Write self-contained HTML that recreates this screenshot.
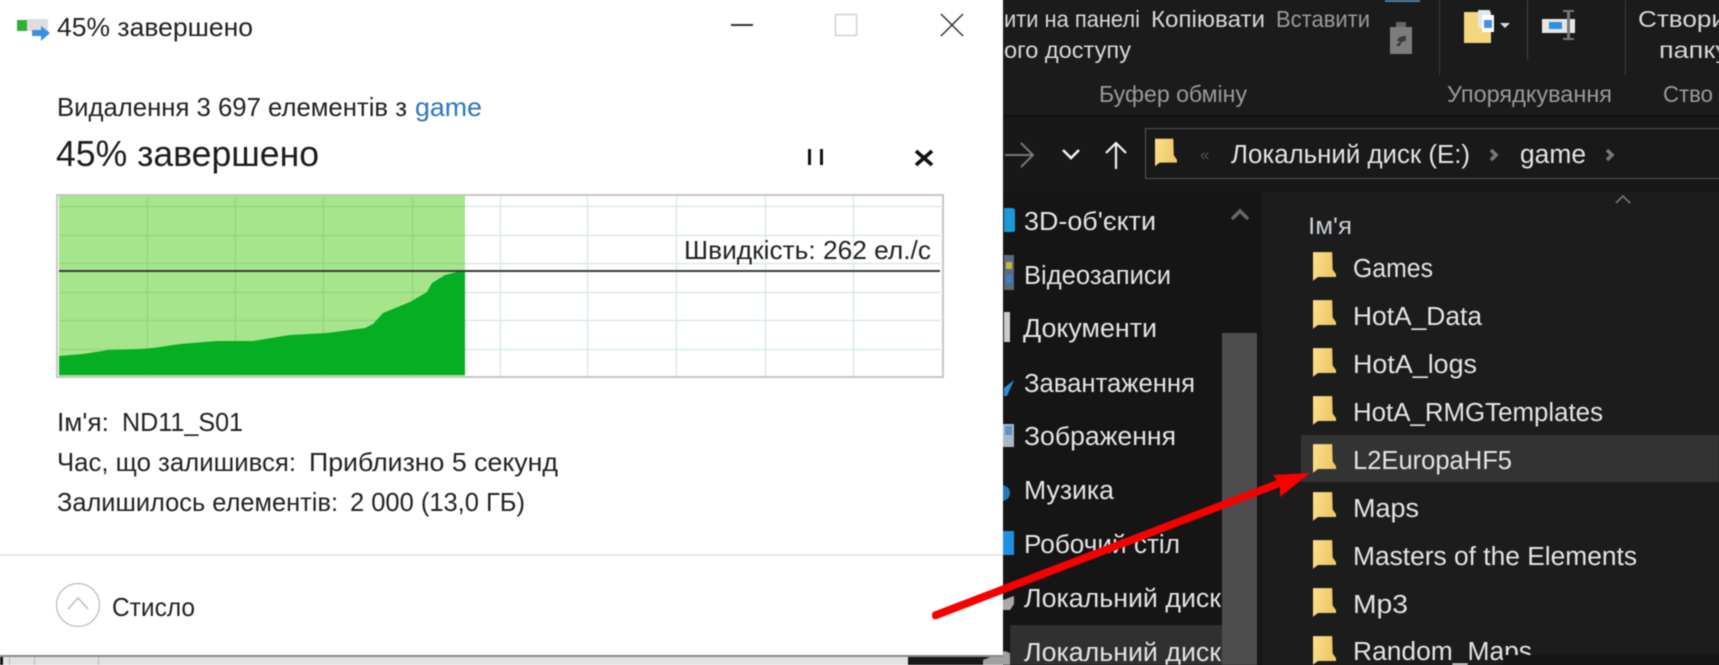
<!DOCTYPE html>
<html lang="uk">
<head>
<meta charset="utf-8">
<title>45% завершено</title>
<style>
html,body{margin:0;padding:0;width:1719px;height:665px;overflow:hidden;background:linear-gradient(90deg,#fff 0,#fff 1003px,#191919 1003px,#191919 1719px)}
svg{display:block;filter:blur(.4px)}
text{font-family:"Liberation Sans",sans-serif}
.d{fill:#222;font-size:26px}
.w{fill:#e4e4e4;font-size:25.500px}
.r{fill:#d8d8d8;font-size:23.500px}
.g{fill:#9a9a9a;font-size:23.500px}
</style>
</head>
<body>
<svg width="1719" height="665" viewBox="0 0 1719 665" xmlns="http://www.w3.org/2000/svg">
<defs>
<linearGradient id="fg" x1="0" x2="1" y1="0" y2="0.3"><stop offset="0" stop-color="#fbe08a"/><stop offset="1" stop-color="#eec866"/></linearGradient>
<symbol id="folder" viewBox="0 0 24 32" overflow="visible"><path d="M0 1H20L20.500 19L24 24V27H5L0 31Z" fill="url(#fg)"/></symbol>
</defs>

<!-- explorer background -->
<rect width="1719" height="665" fill="#191919"/>
<rect x="1003" y="0" width="716" height="115" fill="#1b1b1b"/>
<rect x="1003" y="115" width="716" height="2" fill="#111"/>
<rect x="1003" y="117" width="716" height="75" fill="#181818"/>
<rect x="1003" y="192" width="259" height="473" fill="#151515"/>
<rect x="1262" y="192" width="457" height="473" fill="#1c1c1c"/>

<!-- ribbon -->
<rect x="1385" y="0" width="35" height="2" fill="#4f7fa8"/>
<path d="M1390 27H1412V54H1390Z" fill="#7c7c7c"/><rect x="1396" y="22" width="10" height="5" fill="#666"/>
<path d="M1396 46l4-5h-3c1-4 4-5 9-5v5c-3 0-5 1-6 5z" fill="#3a3a3a"/>
<rect x="1439" y="0" width="1" height="75" fill="#3c3c3c"/>
<rect x="1527" y="0" width="1" height="60" fill="#444"/>
<rect x="1625" y="0" width="1" height="75" fill="#3c3c3c"/>
<rect x="1464" y="12" width="27" height="31" fill="#f3d77c"/>
<rect x="1478" y="10" width="12" height="18" fill="#dfe8f2"/><rect x="1482" y="15" width="12" height="17" fill="#fff"/><rect x="1484" y="20" width="8" height="8" fill="#4a90d8"/>
<path d="M1500 23h10l-5 5z" fill="#ddd"/>
<rect x="1542" y="19" width="33" height="14" fill="#e6e6e6"/><rect x="1549" y="22" width="13" height="7" fill="#2f8fe0"/>
<rect x="1567" y="10" width="3" height="30" fill="#777"/><rect x="1563" y="10" width="11" height="2" fill="#777"/><rect x="1563" y="38" width="11" height="2" fill="#777"/>

<text class="r" x="1004" y="27" textLength="136" lengthAdjust="spacingAndGlyphs">ити на панелі</text>
<text class="r" x="1151" y="27" textLength="114" lengthAdjust="spacingAndGlyphs">Копіювати</text>
<text class="g" x="1276" y="27" textLength="94" lengthAdjust="spacingAndGlyphs">Вставити</text>
<text class="r" x="1004" y="58" textLength="127" lengthAdjust="spacingAndGlyphs">ого доступу</text>
<text class="r" x="1638" y="27" textLength="88" lengthAdjust="spacingAndGlyphs">Створи</text>
<text class="r" x="1659" y="58" textLength="70" lengthAdjust="spacingAndGlyphs">папку</text>
<text class="g" x="1099" y="102" textLength="148" lengthAdjust="spacingAndGlyphs">Буфер обміну</text>
<text class="g" x="1447" y="102" textLength="165" lengthAdjust="spacingAndGlyphs">Упорядкування</text>
<text class="g" x="1663" y="102" textLength="50" lengthAdjust="spacingAndGlyphs">Ство</text>

<!-- nav bar -->
<path d="M1005 155H1033M1021 143L1033 155L1021 167" fill="none" stroke="#777" stroke-width="2"/>
<path d="M1063 150L1071 158L1079 150" fill="none" stroke="#eee" stroke-width="2.600"/>
<path d="M1116 169V143M1106 153L1116 143L1126 153" fill="none" stroke="#f2f2f2" stroke-width="2.200"/>
<rect x="1145.500" y="128.500" width="580" height="50" fill="#191919" stroke="#555"/>
<use href="#folder" x="1155" y="137" width="22" height="31"/>
<text x="1200" y="160" fill="#555" font-size="17">«</text>
<text class="w" x="1231" y="163" textLength="239" lengthAdjust="spacingAndGlyphs">Локальний диск (E:)</text>
<path d="M1491 150L1496 155L1491 160" fill="none" stroke="#777" stroke-width="3.600"/>
<text class="w" x="1520" y="163" textLength="66" lengthAdjust="spacingAndGlyphs">game</text>
<path d="M1607 150L1612 155L1607 160" fill="none" stroke="#777" stroke-width="3.600"/>

<!-- sidebar -->
<path d="M1004 208h8q3 0 3 3v19q0 2-3 2h-8z" fill="#1b9ad6"/>
<rect x="1004" y="255" width="10" height="35" fill="#5a6a80"/><rect x="1006" y="262" width="6" height="7" fill="#c9b53a"/><rect x="1006" y="275" width="6" height="8" fill="#3f7fc8"/>
<rect x="1004" y="312" width="6" height="30" fill="#c8ccd0"/>
<path d="M1004 388L1014 380L1007 396L1004 396Z" fill="#2a8fd0"/>
<rect x="1003" y="424" width="11" height="23" fill="#aab8c4"/><rect x="1005" y="426" width="7" height="9" fill="#5d93c9"/>
<path d="M1003 485q7 2 7 8t-7 8z" fill="#1f79b8"/>
<rect x="1003" y="531" width="11" height="24" fill="#1f8fde"/>
<path d="M1003 600L1014 596V604L1010 610H1003Z" fill="#a8a8a8"/>
<path d="M983 660L1005 651L1014 655V665H983Z" fill="#a0a0a0"/>
<rect x="1010" y="625" width="212" height="40" fill="#303030"/>
<path d="M1232 219L1240 211L1248 219" fill="none" stroke="#666" stroke-width="3.500"/>
<text class="w" x="1024" y="230" textLength="132" lengthAdjust="spacingAndGlyphs">3D-об'єкти</text>
<text class="w" x="1024" y="284" textLength="147" lengthAdjust="spacingAndGlyphs">Відеозаписи</text>
<text class="w" x="1023" y="337" textLength="134" lengthAdjust="spacingAndGlyphs">Документи</text>
<text class="w" x="1024" y="392" textLength="171" lengthAdjust="spacingAndGlyphs">Завантаження</text>
<text class="w" x="1024" y="445" textLength="152" lengthAdjust="spacingAndGlyphs">Зображення</text>
<text class="w" x="1024" y="499" textLength="90" lengthAdjust="spacingAndGlyphs">Музика</text>
<text class="w" x="1024" y="553" textLength="156" lengthAdjust="spacingAndGlyphs">Робочий стіл</text>
<text class="w" x="1024" y="607" textLength="197" lengthAdjust="spacingAndGlyphs">Локальний диск</text>
<text class="w" x="1024" y="661" textLength="197" lengthAdjust="spacingAndGlyphs">Локальний диск</text>
<rect x="1222" y="333" width="35" height="332" fill="#4d4d4d"/>

<!-- file list -->
<path d="M1616 203L1623 196L1630 203" fill="none" stroke="#777" stroke-width="1.600"/>
<text x="1308" y="234" fill="#c8d0d8" font-size="24" textLength="44" lengthAdjust="spacingAndGlyphs">Ім'я</text>
<rect x="1301" y="435" width="418" height="47" fill="#333"/>
<use href="#folder" x="1313" y="251" width="23" height="31"/>
<use href="#folder" x="1313" y="299" width="23" height="31"/>
<use href="#folder" x="1313" y="347" width="23" height="31"/>
<use href="#folder" x="1313" y="395" width="23" height="31"/>
<use href="#folder" x="1313" y="443" width="23" height="31"/>
<use href="#folder" x="1313" y="491" width="23" height="31"/>
<use href="#folder" x="1313" y="539" width="23" height="31"/>
<use href="#folder" x="1313" y="587" width="23" height="31"/>
<use href="#folder" x="1313" y="635" width="23" height="31"/>
<text class="w" x="1353" y="277" textLength="80" lengthAdjust="spacingAndGlyphs">Games</text>
<text class="w" x="1353" y="325" textLength="129" lengthAdjust="spacingAndGlyphs">HotA_Data</text>
<text class="w" x="1353" y="373" textLength="124" lengthAdjust="spacingAndGlyphs">HotA_logs</text>
<text class="w" x="1353" y="421" textLength="250" lengthAdjust="spacingAndGlyphs">HotA_RMGTemplates</text>
<text class="w" x="1353" y="469" textLength="159" lengthAdjust="spacingAndGlyphs">L2EuropaHF5</text>
<text class="w" x="1353" y="517" textLength="66" lengthAdjust="spacingAndGlyphs">Maps</text>
<text class="w" x="1353" y="565" textLength="284" lengthAdjust="spacingAndGlyphs">Masters of the Elements</text>
<text class="w" x="1353" y="613" textLength="55" lengthAdjust="spacingAndGlyphs">Mp3</text>
<text class="w" x="1353" y="660" textLength="179" lengthAdjust="spacingAndGlyphs">Random_Maps</text>
<rect x="1503" y="655" width="216" height="10" fill="#161616"/>

<!-- bottom strip below dialog -->
<rect x="0" y="656" width="908" height="9" fill="#e2e2e2"/>
<rect x="0" y="655" width="1003" height="2" fill="#8a8a8a"/>
<rect x="0" y="657" width="3" height="8" fill="#111"/>
<rect x="9" y="657" width="1" height="8" fill="#bbb"/><rect x="34" y="657" width="1" height="8" fill="#bbb"/><rect x="98" y="657" width="1" height="8" fill="#bbb"/>

<!-- dialog -->
<rect x="0" y="0" width="1003" height="655" fill="#fff"/>
<rect x="17" y="20" width="10" height="11" fill="#2fb034"/>
<rect x="27" y="19" width="21" height="12" fill="#dedede"/>
<path d="M32 30H41V26L50 33L41 41V36H32Z" fill="#3b90e0"/>
<text class="d" x="57" y="36" textLength="196" lengthAdjust="spacingAndGlyphs">45% завершено</text>
<rect x="731" y="24" width="22" height="2" fill="#333"/>
<rect x="835.500" y="14.500" width="21" height="21" fill="#fff" stroke="#d2d2d2" stroke-width="1.500"/>
<path d="M941 14L963 36M963 14L941 36" stroke="#333" stroke-width="1.500"/>

<text class="d" x="57" y="116" textLength="350" lengthAdjust="spacingAndGlyphs">Видалення 3 697 елементів з</text>
<text x="415" y="116" fill="#2a76c6" font-size="26" textLength="67" lengthAdjust="spacingAndGlyphs">game</text>
<text x="56" y="166" fill="#1c1c1c" font-size="36" textLength="263" lengthAdjust="spacingAndGlyphs">45% завершено</text>
<rect x="808" y="149" width="3" height="16" fill="#111"/><rect x="820" y="149" width="3" height="16" fill="#111"/>
<path d="M916 151L932 165M932 151L916 165" stroke="#111" stroke-width="3.600"/>

<!-- graph -->
<rect x="57" y="195" width="886" height="182" fill="#fff" stroke="#c6c6c6" stroke-width="2"/>
<g stroke="#d2e9dc" stroke-width="1.200">
<path d="M59 206.500H941M59 235.500H941M59 263.500H941M59 292.500H941M59 320.500H941M59 349.500H941"/>
<path d="M500.500 196V376M587.500 196V376M676.500 196V376M765.500 196V376M853.500 196V376"/>
</g>
<rect x="59" y="196" width="406" height="180" fill="#a6e58c"/>
<g stroke="#8fd67b" stroke-width="1.200">
<path d="M59 206.500H465M59 235.500H465M59 263.500H465M59 292.500H465M59 320.500H465M59 349.500H465"/>
<path d="M147.500 196V376M235.500 196V376M323.500 196V376M412.500 196V376"/>
</g>
<path d="M59 356L83 354L108 350L140 349L153 348L180 344L217 341L253 341L290 335L327 333L365 328L373 324L383 313L410 302L427 292L432 283L445 275L465 270V375H59Z" fill="#06ae24"/>
<rect x="59" y="270" width="881" height="2" fill="#3a3a3a"/>
<text class="d" x="684" y="259" textLength="247" lengthAdjust="spacingAndGlyphs">Швидкість: 262 ел./с</text>

<!-- details -->
<text class="d" x="57" y="431" textLength="52" lengthAdjust="spacingAndGlyphs">Ім'я:</text>
<text class="d" x="122" y="431" textLength="121" lengthAdjust="spacingAndGlyphs">ND11_S01</text>
<text class="d" x="57" y="471" textLength="239" lengthAdjust="spacingAndGlyphs">Час, що залишився:</text>
<text class="d" x="309" y="471" textLength="249" lengthAdjust="spacingAndGlyphs">Приблизно 5 секунд</text>
<text class="d" x="57" y="511" textLength="281" lengthAdjust="spacingAndGlyphs">Залишилось елементів:</text>
<text class="d" x="350" y="511" textLength="175" lengthAdjust="spacingAndGlyphs">2 000 (13,0 ГБ)</text>
<rect x="0" y="554" width="1003" height="2" fill="#e6e6e6"/>
<circle cx="78" cy="605" r="21.500" fill="#fff" stroke="#bdbdbd" stroke-width="1.300"/>
<path d="M68 609L78 598L88 609" fill="none" stroke="#bdbdbd" stroke-width="1.500"/>
<text class="d" x="112" y="616" textLength="83" lengthAdjust="spacingAndGlyphs">Стисло</text>

<!-- red arrow -->
<path d="M933 612L1277 480L1273 475L1310 473L1280 497L1280 487L937 619Q932 620 932 616Q932 613 933 612Z" fill="#f90000"/>
</svg>
</body>
</html>
